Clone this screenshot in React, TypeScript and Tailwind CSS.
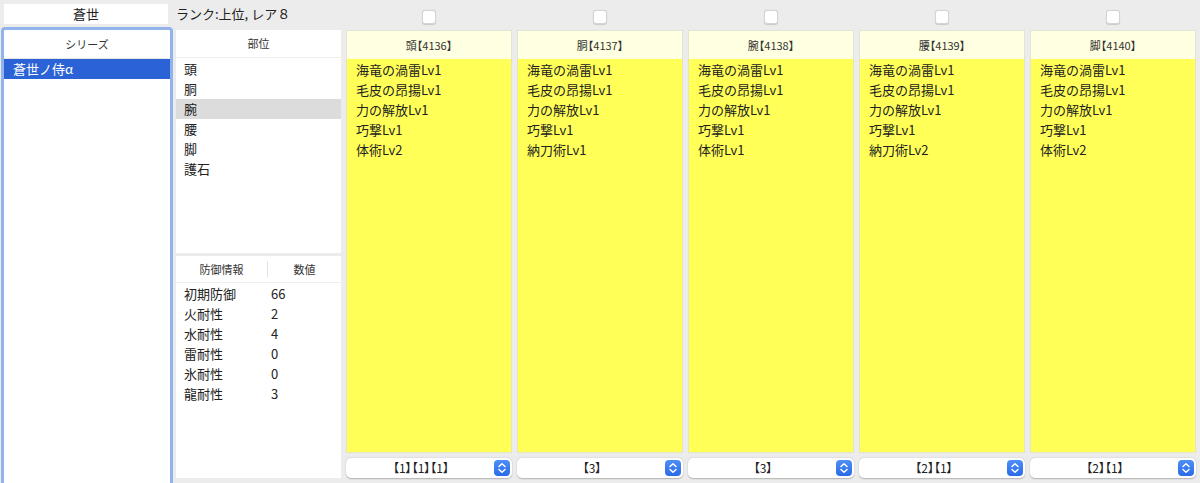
import React from "react";

const FONT = { fontFamily: '"Noto Sans CJK JP", "Noto Sans", sans-serif' };

const columns = [
  { title: "頭【4136】", skills: ["海竜の渦雷Lv1", "毛皮の昂揚Lv1", "力の解放Lv1", "巧撃Lv1", "体術Lv2"], slot: "【1】【1】【1】" },
  { title: "胴【4137】", skills: ["海竜の渦雷Lv1", "毛皮の昂揚Lv1", "力の解放Lv1", "巧撃Lv1", "納刀術Lv1"], slot: "【3】" },
  { title: "腕【4138】", skills: ["海竜の渦雷Lv1", "毛皮の昂揚Lv1", "力の解放Lv1", "巧撃Lv1", "体術Lv1"], slot: "【3】" },
  { title: "腰【4139】", skills: ["海竜の渦雷Lv1", "毛皮の昂揚Lv1", "力の解放Lv1", "巧撃Lv1", "納刀術Lv2"], slot: "【2】【1】" },
  { title: "脚【4140】", skills: ["海竜の渦雷Lv1", "毛皮の昂揚Lv1", "力の解放Lv1", "巧撃Lv1", "体術Lv2"], slot: "【2】【1】" },
];

const parts = ["頭", "胴", "腕", "腰", "脚", "護石"];
const defense = [
  ["初期防御", "66"],
  ["火耐性", "2"],
  ["水耐性", "4"],
  ["雷耐性", "0"],
  ["氷耐性", "0"],
  ["龍耐性", "3"],
];

function Stepper() {
  return (
    <svg width="16" height="16" viewBox="0 0 16 16" className="shrink-0">
      <defs>
        <linearGradient id="stg" x1="0" y1="0" x2="0" y2="1">
          <stop offset="0" stopColor="#4f8ff7" />
          <stop offset="1" stopColor="#2a6ae8" />
        </linearGradient>
      </defs>
      <rect x="0" y="0" width="16" height="16" rx="4" fill="url(#stg)" />
      <path d="M5 6.5 L8 3.8 L11 6.5" fill="none" stroke="#fff" strokeWidth="1.5" strokeLinecap="round" strokeLinejoin="round" />
      <path d="M5 9.5 L8 12.2 L11 9.5" fill="none" stroke="#fff" strokeWidth="1.5" strokeLinecap="round" strokeLinejoin="round" />
    </svg>
  );
}

function Checkbox() {
  return <div className="w-[14px] h-[14px] rounded-[3px] bg-white border border-[#d4d4d4] shadow-[0_0.5px_1px_rgba(0,0,0,0.15)]" />;
}

export default function App() {
  return (
    <div style={FONT} className="w-[1200px] h-[483px] bg-[#ececec] overflow-hidden flex flex-col text-[#222]">
      {/* top row */}
      <div className="h-[27px] flex items-start shrink-0">
        <div className="w-[346px] flex items-center pt-[4px]">
          <div className="ml-[4px] w-[164px] h-[20px] bg-white flex items-center justify-center text-[13px] text-[#222]">蒼世</div>
          <div className="ml-[8px] text-[13px] text-[#222]">ランク:上位, レア８</div>
        </div>
        <div className="flex gap-[5px] pt-[10px]">
          {columns.map((c) => (
            <div key={c.title} className="w-[166px] flex justify-center">
              <Checkbox />
            </div>
          ))}
        </div>
      </div>

      {/* main row */}
      <div className="flex flex-1 min-h-0">
        {/* series panel */}
        <div className="ml-[1px] w-[172px] h-[470px] border-[3px] border-[#92b3ec] rounded-[4px] bg-white flex flex-col">
          <div className="h-[29px] flex items-center justify-center text-[11px] text-[#333] border-b border-[#e6e6e6] shrink-0">シリーズ</div>
          <div className="h-[20px] bg-[#2b62d6] text-white text-[13px] flex items-center pl-[9px]">蒼世ノ侍α</div>
        </div>

        {/* parts + defense */}
        <div className="ml-[3px] w-[165px] pt-[3px] flex flex-col">
          <div className="h-[223px] bg-white flex flex-col">
            <div className="h-[28px] flex items-center justify-center text-[11px] text-[#333] border-b border-[#eeeeee] shrink-0">部位</div>
            <div className="pt-[1px]">
              {parts.map((p) => (
                <div key={p} className={`h-[20px] flex items-center pl-[8px] text-[13px] ${p === "腕" ? "bg-[#dcdcdc]" : ""}`}>{p}</div>
              ))}
            </div>
          </div>
          <div className="mt-[3px] h-[222px] bg-white flex flex-col">
            <div className="h-[27px] flex items-center text-[11px] text-[#333] border-b border-[#eeeeee] shrink-0">
              <div className="w-[91px] text-center">防御情報</div>
              <div className="w-[1px] h-[16px] bg-[#e2e2e2]" />
              <div className="flex-1 text-center">数値</div>
            </div>
            <div className="pt-[1px]">
              {defense.map(([k, v]) => (
                <div key={k} className="h-[20px] flex items-center text-[13px]">
                  <div className="w-[95px] pl-[8px]">{k}</div>
                  <div>{v}</div>
                </div>
              ))}
            </div>
          </div>
        </div>

        {/* equipment columns */}
        <div className="ml-[5px] pt-[3px] flex gap-[5px]">
          {columns.map((c) => (
            <div key={c.title} className="w-[166px] flex flex-col">
              <div className="h-[29px] bg-[#ffffe1] border border-[#e4e4d4] border-b-0 flex items-center justify-center text-[11px] text-[#333] shrink-0 [font-feature-settings:'palt']">{c.title}</div>
              <div className="h-[394px] bg-[#ffff57] pt-[1px] border-x border-b border-[#e4e4c0]">
                {c.skills.map((s, i) => (
                  <div key={i} className="h-[20px] flex items-center pl-[9px] text-[13px] text-[#222]">{s}</div>
                ))}
              </div>
              <div className="mt-[5px] h-[20px] bg-white rounded-[5px] shadow-[0_0.5px_1.5px_rgba(0,0,0,0.25)] flex items-center pl-[2px] pr-[2px]">
                <div className="flex-1 text-center text-[12px] text-[#222] [font-feature-settings:'palt']">{c.slot}</div>
                <Stepper />
              </div>
            </div>
          ))}
        </div>
      </div>
    </div>
  );
}
